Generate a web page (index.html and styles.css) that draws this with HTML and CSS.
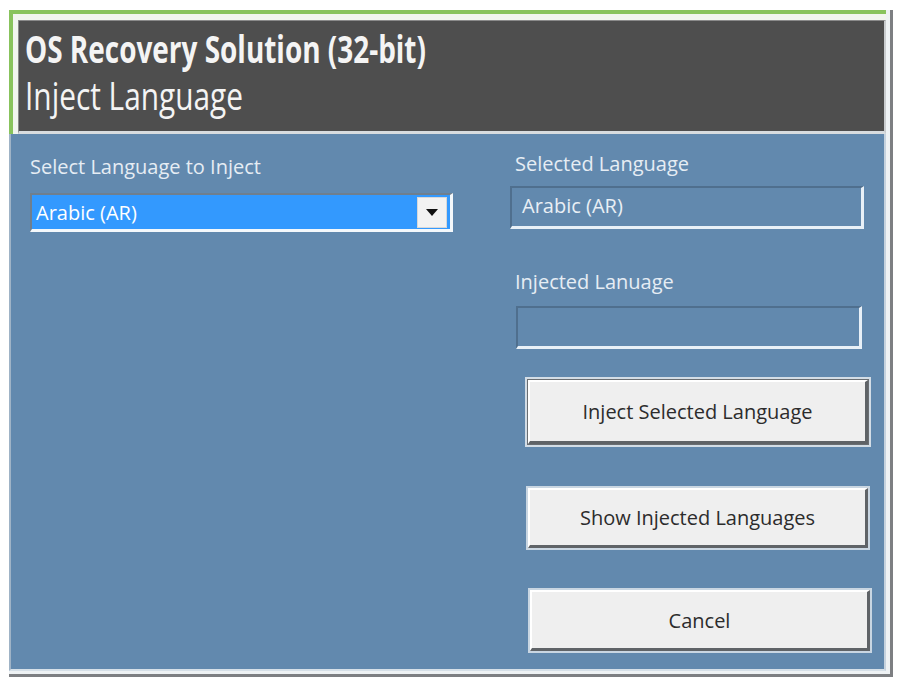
FILE: index.html
```html
<!DOCTYPE html>
<html>
<head>
<meta charset="utf-8">
<link rel="stylesheet" href="styles.css">
</head>
<body>
<div class="frame">
  <div class="window">
    <div class="header">
      <div class="header-inner">
        <div class="title">OS Recovery Solution (32-bit)</div>
        <div class="subtitle">Inject Language</div>
      </div>
    </div>
    <div class="content">
      <div class="col-left">
        <div class="label label-left">Select Language to Inject</div>
        <div class="combo">
          <span class="combo-text">Arabic (AR)</span>
          <span class="combo-btn"><span class="arrow"></span></span>
        </div>
      </div>
      <div class="col-right">
        <div class="label label-r1">Selected Language</div>
        <div class="field field1">Arabic (AR)</div>
        <div class="label label-r2">Injected Lanuage</div>
        <div class="field field2"></div>
        <div class="btn btn1">Inject Selected Language</div>
        <div class="btn btn2">Show Injected Languages</div>
        <div class="btn btn3">Cancel</div>
      </div>
    </div>
  </div>
</div>
</body>
</html>
```
FILE: styles.css
```css
* { box-sizing: border-box; }
html, body { margin: 0; padding: 0; background: #ffffff; }
body { font-family: "Open Sans", "DejaVu Sans", sans-serif; }

.frame {
  margin: 10px 0 0 9px;
  width: 884px;
  height: 667px;
  border-right: 3px solid #7d7f82;
  border-bottom: 3px solid #7d7f82;
  padding: 0 4px 3px 0;
  background: #eef2f4;
}
.window {
  height: 100%;
  display: flex;
  flex-direction: column;
}
.header {
  border-top: 4px solid #88c35c;
  border-left: 4px solid #88c35c;
  padding: 6px 0 0 5px;
  background: #f1f5ee;
}
.header-inner {
  height: 114px;
  background: #4e4e4e;
  border-right: 2px solid #c9ccce;
  border-bottom: 3px solid #d8dcdf;
  border-top: 1px solid #8a8a8a;
  border-left: 1px solid #8a8a8a;
  padding: 4px 0 0 6px;
  color: #f4f4f4;
  overflow: hidden;
}
.title {
  font-family: "Open Sans", sans-serif;
  font-weight: 700;
  font-size: 38px;
  line-height: 46px;
  transform: scaleX(0.735);
  transform-origin: left center;
  white-space: nowrap;
}
.subtitle {
  font-family: "Open Sans", sans-serif;
  font-weight: 400;
  font-size: 38px;
  line-height: 48px;
  transform: scaleX(0.785);
  transform-origin: left center;
  white-space: nowrap;
}

.content {
  flex: 1;
  background: #6289ae;
  border-left: 2px solid #9fb3c6;
  border-right: 2px solid #c5d2de;
  border-bottom: 2px solid #d6e0e8;
  display: flex;
  padding-left: 19px;
}
.label {
  color: #e6edf4;
  font-size: 20px;
  line-height: 24px;
  white-space: nowrap;
}
.col-left { width: 423px; }
.label-left { margin-top: 21px; }
.combo {
  margin-top: 14px;
  height: 39px;
  background: #3399fe;
  border-top: 2px solid #6f7f8e;
  border-left: 2px solid #6f7f8e;
  border-bottom: 3px solid #f4f8fb;
  border-right: 3px solid #f4f8fb;
  display: flex;
  align-items: center;
  padding-left: 4px;
  padding-right: 3px;
}
.combo-text {
  flex: 1;
  color: #ffffff;
  font-size: 20px;
}
.combo-btn {
  width: 30px;
  height: 31px;
  background: #f2f2f2;
  border: 1px solid #d8d8d8;
  display: flex;
  align-items: center;
  justify-content: center;
}
.arrow {
  width: 0;
  height: 0;
  border-left: 6px solid transparent;
  border-right: 6px solid transparent;
  border-top: 7px solid #111;
}

.col-right {
  margin-left: 57px;
  width: 360px;
  display: flex;
  flex-direction: column;
}
.label-r1 { margin-top: 18px; margin-left: 5px; }
.field {
  height: 43px;
  width: 354px;
  border-top: 2px solid #4f6f8e;
  border-left: 2px solid #4f6f8e;
  border-bottom: 3px solid #e8f0f7;
  border-right: 3px solid #e8f0f7;
  color: #e9eff5;
  font-size: 20px;
  line-height: 36px;
  padding-left: 10px;
}
.field1 { margin-top: 10px; }
.label-r2 { margin-top: 41px; margin-left: 5px; }
.field2 { margin-top: 12px; margin-left: 6px; width: 346px; }

.btn {
  width: 340px;
  background: #efefef;
  border-top: 2px solid #ffffff;
  border-left: 2px solid #ffffff;
  border-bottom: 3px solid #5f6367;
  border-right: 3px solid #5f6367;
  box-shadow: 0 0 0 2px #c9d6e2;
  color: #2c2c2c;
  font-size: 20px;
  display: flex;
  align-items: center;
  justify-content: center;
  margin-left: 18px;
}
.btn1 { margin-top: 31px; height: 64px; box-shadow: 0 0 0 1px #6a6e72, 0 0 0 3px #d3dde6; }
.btn2 { margin-top: 44px; height: 60px; }
.btn3 { margin-top: 42px; height: 61px; margin-left: 20px; }
```
